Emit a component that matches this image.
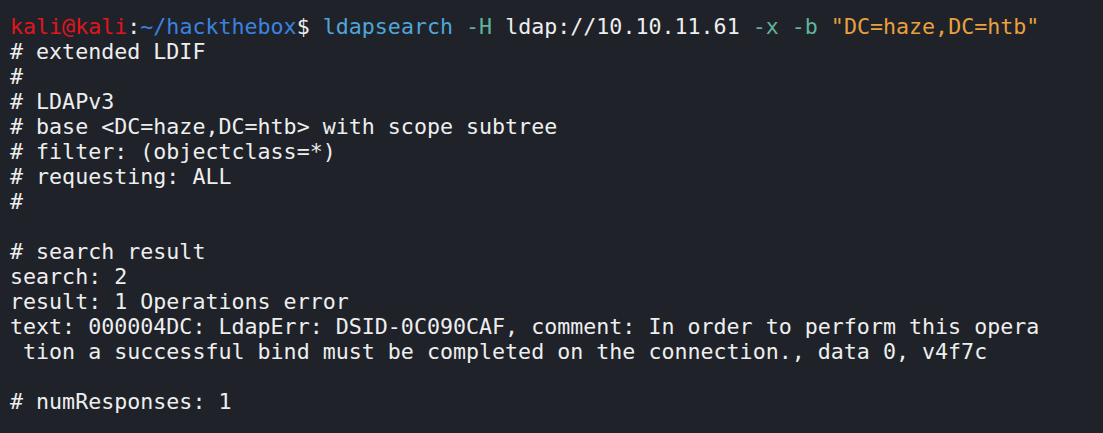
const lines: string[] = [
  '# extended LDIF',
  '#',
  '# LDAPv3',
  '# base <DC=haze,DC=htb> with scope subtree',
  '# filter: (objectclass=*)',
  '# requesting: ALL',
  '#',
  '',
  '# search result',
  'search: 2',
  'result: 1 Operations error',
  'text: 000004DC: LdapErr: DSID-0C090CAF, comment: In order to perform this opera',
  ' tion a successful bind must be completed on the connection., data 0, v4f7c',
  '',
  '# numResponses: 1',
];

export default function App() {
  return (
    <div className="h-[433px] w-full overflow-hidden bg-[#1f2229] pl-[10px] pt-[14px] font-['DejaVu_Sans_Mono',monospace] text-[21.65px] leading-[25px] text-[#eeeeee] whitespace-pre">
      <div>
        <span className="text-[#e0161c]">kali@kali</span>
        <span className="text-[#eeeeee]">:</span>
        <span className="text-[#3b82e0]">~/hackthebox</span>
        <span className="text-[#eeeeee]">$ </span>
        <span className="text-[#4ea6d9]">ldapsearch</span>
        <span className="text-[#5fb39b]"> -H</span>
        <span> ldap://10.10.11.61</span>
        <span className="text-[#5fb39b]"> -x -b</span>
        <span className="text-[#e9a03e]"> "DC=haze,DC=htb"</span>
      </div>
      {lines.map((line, i) => (
        <div key={i} className="h-[25px]">
          {line}
        </div>
      ))}
    </div>
  );
}
